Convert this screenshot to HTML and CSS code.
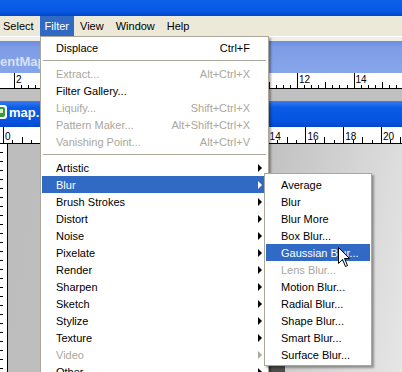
FILE: index.html
```html
<!DOCTYPE html>
<html lang="en">
<head>
<meta charset="UTF-8">
<title>Filter menu</title>
<link rel="stylesheet" href="styles.css">
</head>
<body>
<div class="app">
  <div class="titlebar"></div>

  <ul class="menubar">
    <li class="first">Select</li>
    <li class="open">Filter</li>
    <li>View</li>
    <li>Window</li>
    <li>Help</li>
  </ul>

  <div class="workspace">
    <div class="strip"></div>
    <div class="doc-title inactive"><span class="name">entMap</span></div>
    <!-- labels hidden under the open menu are left empty -->
    <div class="ruler ruler-a">
      <span>2</span><span></span><span></span><span></span><span></span><span>12</span><span>14</span>
    </div>
    <div class="gap"></div>
    <div class="doc-title active">
      <svg class="doc-icon" width="8" height="14" viewBox="0 0 8 14">
        <rect x="-6" y="0" width="13" height="14" rx="3" fill="#fff"/>
        <rect x="-4" y="2" width="9" height="10" rx="2" fill="#3c9a3a"/>
        <rect x="-2" y="4" width="5" height="4" fill="#d7f0c8"/>
      </svg><span class="name">map.</span>
    </div>
    <div class="ruler ruler-b">
      <span>0</span><span></span><span></span><span></span><span></span><span></span><span></span><span>14</span><span>16</span><span>18</span><span>20</span>
    </div>
    <div class="doc-body">
      <div class="vruler"></div>
      <div class="canvas"><div class="image"></div></div>
    </div>
  </div>

  <ul class="menu">
    <li class="item"><span class="label">Displace</span><span class="key">Ctrl+F</span></li>
    <li class="sep"></li>
    <li class="item off"><span class="label">Extract...</span><span class="key">Alt+Ctrl+X</span></li>
    <li class="item"><span class="label">Filter Gallery...</span></li>
    <li class="item off"><span class="label">Liquify...</span><span class="key">Shift+Ctrl+X</span></li>
    <li class="item off"><span class="label">Pattern Maker...</span><span class="key">Alt+Shift+Ctrl+X</span></li>
    <li class="item off"><span class="label">Vanishing Point...</span><span class="key">Alt+Ctrl+V</span></li>
    <li class="sep"></li>
    <li class="item sub"><span class="label">Artistic</span><i class="arrow"></i></li>
    <li class="item sub hot"><span class="label">Blur</span><i class="arrow"></i></li>
    <li class="item sub"><span class="label">Brush Strokes</span><i class="arrow"></i></li>
    <li class="item sub"><span class="label">Distort</span><i class="arrow"></i></li>
    <li class="item sub"><span class="label">Noise</span><i class="arrow"></i></li>
    <li class="item sub"><span class="label">Pixelate</span><i class="arrow"></i></li>
    <li class="item sub"><span class="label">Render</span><i class="arrow"></i></li>
    <li class="item sub"><span class="label">Sharpen</span><i class="arrow"></i></li>
    <li class="item sub"><span class="label">Sketch</span><i class="arrow"></i></li>
    <li class="item sub"><span class="label">Stylize</span><i class="arrow"></i></li>
    <li class="item sub"><span class="label">Texture</span><i class="arrow"></i></li>
    <li class="item sub off"><span class="label">Video</span><i class="arrow"></i></li>
    <li class="item sub"><span class="label">Other</span><i class="arrow"></i></li>
  </ul>

  <ul class="menu submenu">
    <li class="item"><span class="label">Average</span></li>
    <li class="item"><span class="label">Blur</span></li>
    <li class="item"><span class="label">Blur More</span></li>
    <li class="item"><span class="label">Box Blur...</span></li>
    <li class="item hot"><span class="label">Gaussian Blur...</span></li>
    <li class="item off"><span class="label">Lens Blur...</span></li>
    <li class="item"><span class="label">Motion Blur...</span></li>
    <li class="item"><span class="label">Radial Blur...</span></li>
    <li class="item"><span class="label">Shape Blur...</span></li>
    <li class="item"><span class="label">Smart Blur...</span></li>
    <li class="item"><span class="label">Surface Blur...</span></li>
  </ul>

  <svg class="cursor" width="13" height="21" viewBox="0 0 13 21">
    <path d="M0.5 0.5 L0.5 16.5 L4.5 12.5 L7.5 19.5 L9.5 18.5 L6.5 11.5 L11.5 11.5 Z" fill="#fff" stroke="#000" stroke-width="1"/>
  </svg>
</div>
</body>
</html>
```

FILE: styles.css
```css
body { margin: 0; background: #c0c0c0; }
ul { list-style: none; margin: 0; padding: 0; }
.app { position: relative; width: 402px; height: 372px; overflow: hidden; font-family: "Liberation Sans", Arial, sans-serif; font-size: 11px; }

.titlebar { height: 16px; background: linear-gradient(#0c60ea, #0757e2 70%, #0346cc); }

.menubar { display: flex; height: 20px; background: #ece9d8; align-items: stretch; }
.menubar li { display: flex; align-items: center; padding: 0 6px; }
.menubar li.first { padding-left: 3px; }
.menubar li.open { background: #316ac5; color: #fff; padding: 0 5px; }

.workspace { display: flex; flex-direction: column; }
.strip { height: 4px; background: #efeee7; border-top: 1px solid #fff; }
.doc-title { display: flex; align-items: center; font-weight: bold; font-size: 13px; white-space: nowrap; overflow: hidden; }
.doc-title.inactive { height: 32px; padding-top: 9px; box-sizing: border-box; color: #d8e0f8; background: linear-gradient(#6d8de0, #7d9ce6 20%, #87a6ea); }
.doc-title.active { height: 26px; padding-bottom: 4px; box-sizing: border-box; color: #fff; background: linear-gradient(#3a7cf2, #0a5ce6 25%, #0553df 80%, #0447c8); }
.doc-icon { margin-right: 1px; }

.ruler { display: flex; background-color: #fff; border-bottom: 1px solid #000; box-sizing: border-box; font-size: 10px; line-height: 10px; }
.ruler span { flex: none; box-sizing: border-box; border-left: 1px solid #000; padding: 2px 0 0 1px; }
.ruler-a { height: 16px; padding-left: 14px;
  background-image: repeating-linear-gradient(90deg, #000 0 1px, transparent 1px 7.075px), repeating-linear-gradient(90deg, #000 0 1px, transparent 1px 28.3px);
  background-size: 100% 3px, 100% 6px; background-position: 14px 100%, 14px 100%; background-repeat: no-repeat; }
.ruler-a span { width: 56.6px; }
.ruler-b { height: 17px; padding-left: 3px;
  background-image: repeating-linear-gradient(90deg, #000 0 1px, transparent 1px 9.45px), repeating-linear-gradient(90deg, #000 0 1px, transparent 1px 18.9px);
  background-size: 100% 3px, 100% 6px; background-position: 3px 100%, 3px 100%; background-repeat: no-repeat; }
.ruler-b span { width: 37.8px; padding-top: 5px; }

.gap { height: 12px; background: #c0c0c0; }

.doc-body { display: flex; height: 230px; }
.vruler { width: 7px; border-right: 1px solid #000; background-color: #fff;
  background-image: repeating-linear-gradient(180deg, transparent 0 8px, #000 8px 9px);
  background-size: 3px 100%; background-repeat: no-repeat; }
.canvas { flex: 1; background: linear-gradient(100deg, #bdbdbd 0%, #c1c1c1 60%, #d8d8d8 85%, #e6e6e6 100%); }
.image { width: 17px; height: 10px; margin: 222px 0 0 260px; background: #4e4e4e; }

.menu { position: absolute; left: 40px; top: 36px; width: 229px; box-sizing: border-box; background: #fff; border: 1px solid #aca899; padding: 2px 1px; box-shadow: 2px 2px 2px rgba(0, 0, 0, 0.35); }
.item { display: flex; align-items: center; height: 17px; padding-left: 14px; white-space: nowrap; color: #000; }
.item .label { flex: 1; }
.item .key { margin-right: 17px; }
.item .arrow { width: 0; height: 0; border-left: 4px solid #000; border-top: 4px solid transparent; border-bottom: 4px solid transparent; margin-right: 5px; }
.item.off { color: #aaa79c; }
.item.off .arrow { border-left-color: #aaa79c; }
.item.hot { background: #316ac5; color: #fff; }
.item.hot .arrow { border-left-color: #fff; }
.sep { height: 9px; display: flex; align-items: center; }
.sep::before { content: ""; flex: 1; height: 1px; background: #aca899; margin: 0 1px; }

.submenu { left: 264px; top: 173px; width: 108px; }
.submenu .item { padding-left: 15px; }

.cursor { position: absolute; left: 338px; top: 247px; }
```
